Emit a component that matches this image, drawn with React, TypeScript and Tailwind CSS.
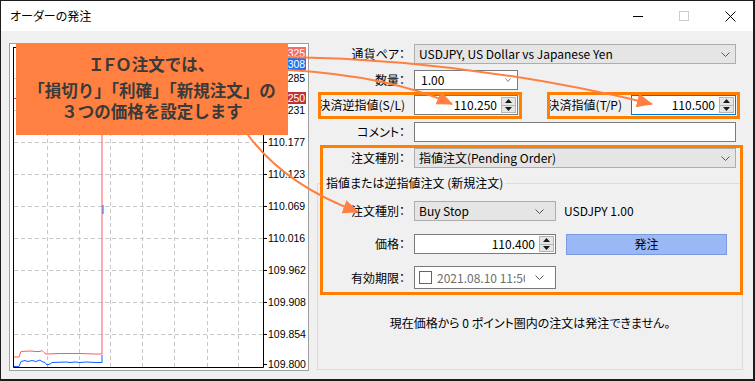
import React from "react";

const Chevron = ({ w = 9, h = 5, color = "#555" }: { w?: number; h?: number; color?: string }) => (
  <svg width={w} height={h} viewBox={`0 0 ${w} ${h}`} className="shrink-0">
    <polyline points={`0.5,0.5 ${w / 2},${h - 0.5} ${w - 0.5},0.5`} fill="none" stroke={color} strokeWidth="1" />
  </svg>
);

const Spinner = () => (
  <div className="w-[15px] h-[16px] mr-[1px] border border-[#b5b5b5] bg-[#e6e6e6] flex flex-col shrink-0">
    <div className="flex-1 flex items-center justify-center border-b border-[#b5b5b5]">
      <svg width="7" height="4" viewBox="0 0 7 4">
        <polygon points="3.5,0 7,4 0,4" fill="#1a1a1a" />
      </svg>
    </div>
    <div className="flex-1 flex items-center justify-center">
      <svg width="7" height="4" viewBox="0 0 7 4">
        <polygon points="0,0 7,0 3.5,4" fill="#1a1a1a" />
      </svg>
    </div>
  </div>
);

const NumField = ({ value, className, focus }: { value: string; className: string; focus?: boolean }) => (
  <div
    className={`flex items-center h-[20px] bg-white border ${focus ? "border-[#0078d7]" : "border-[#7a7a7a]"} ${className}`}
  >
    <div className="flex-1 text-right pr-[4px] leading-[16px]">{value}</div>
    <Spinner />
  </div>
);

const Chart = () => {
  const hy = [78, 110, 142, 174, 206, 238, 270, 302, 334];
  const vx = [47, 79, 110, 142, 174, 207, 238];
  const labels = [
    { y: 78, t: "110.285" },
    { y: 110, t: "110.231" },
    { y: 142, t: "110.177" },
    { y: 174, t: "110.123" },
    { y: 206, t: "110.069" },
    { y: 238, t: "110.016" },
    { y: 270, t: "109.962" },
    { y: 302, t: "109.908" },
    { y: 334, t: "109.854" },
    { y: 364, t: "109.800" },
  ];
  const hl = [
    { y: 53, t: "110.325", c: "#f56a6a", top: 47, h: 11 },
    { y: 64, t: "110.308", c: "#1f72f2", top: 58, h: 12 },
    { y: 98, t: "110.250", c: "#c03232", top: 92, h: 12 },
  ];
  const red =
    "13,357 19,357 21,351.5 30,351 36,351.5 40,351.5 42,350.5 44,352.5 46,354 60,353.5 70,353.5 80,353.5 95,354 102,354 102,47";
  const blue =
    "13,366.5 19,366.5 21,361.5 25,360.5 28,361.5 32,360.5 36,361.5 40,360 42,361.5 45,362.5 47,365 50,364 52,362.5 67,362 70,362.5 75,362 80,362.5 86,362 96,362.5 102,362.5 102,355";
  return (
    <svg width="298" height="326" viewBox="10 44 298 326" className="block">
      <rect x="10" y="44" width="298" height="326" fill="#ffffff" />
      {hy.map((y) => (
        <line key={"h" + y} x1="14" x2="263" y1={y + 0.5} y2={y + 0.5} stroke="#c8c8c8" strokeDasharray="4 3" />
      ))}
      {vx.map((x) => (
        <line key={"v" + x} x1={x + 0.5} x2={x + 0.5} y1="48" y2="367" stroke="#c8c8c8" strokeDasharray="4 3" />
      ))}
      <line x1="13" x2="263" y1="98.5" y2="98.5" stroke="#d04040" />
      <polyline points={red} fill="none" stroke="#ff5a5a" strokeWidth="1" />
      <polyline points={blue} fill="none" stroke="#1060ff" strokeWidth="1" />
      <line x1="103" x2="103" y1="205" y2="214" stroke="#1060ff" />
      <path d="M13.5,47 V367.5 H263.5 V47 M13,47.5 H263.5" fill="none" stroke="#000" />
      {labels.map((l) => (
        <g key={l.t}>
          <line x1="263" x2="267" y1={l.y + 0.5} y2={l.y + 0.5} stroke="#000" />
          <text x="268" y={l.y + 4} fontSize="10.5" fontFamily="Liberation Sans, Arial, sans-serif" fill="#000">
            {l.t}
          </text>
        </g>
      ))}
      {hl.map((l) => (
        <g key={l.t}>
          <rect x="265" y={l.top} width="41" height={l.h} fill={l.c} />
          <text x="268" y={l.y + 4} fontSize="10.5" fontFamily="Liberation Sans, Arial, sans-serif" fill="#fff">
            {l.t}
          </text>
        </g>
      ))}
    </svg>
  );
};

export default function App() {
  return (
    <div className="relative w-[755px] h-[381px] bg-[#1c1c1c] overflow-hidden font-['Noto_Sans_CJK_JP',sans-serif] text-[12px] text-black [font-feature-settings:'palt']">
      <div className="ml-px mt-px w-[752px] h-[378px] bg-[#f0f0f0] flex flex-col">
        {/* title bar */}
        <div className="h-[30px] bg-white flex items-center pl-[9px] shrink-0">
          <span className="leading-[16px]">オーダーの発注</span>
          <div className="ml-auto flex h-full">
            <div className="w-[46px] h-full flex items-center justify-center">
              <div className="w-[10px] h-px bg-black" />
            </div>
            <div className="w-[46px] h-full flex items-center justify-center">
              <div className="w-[10px] h-[10px] border border-[#cccccc]" />
            </div>
            <div className="w-[46px] h-full flex items-center justify-center">
              <svg width="11" height="11" viewBox="0 0 11 11">
                <path d="M0.5,0.5 L10.5,10.5 M10.5,0.5 L0.5,10.5" stroke="#000" strokeWidth="1" />
              </svg>
            </div>
          </div>
        </div>

        {/* body */}
        <div className="flex-1 flex">
          <div className="ml-[8px] mt-[12px] w-[300px] h-[328px] border border-[#a0a0a0] bg-white shrink-0">
            <Chart />
          </div>

          <div className="ml-[7px] mt-[13px] w-[427px] flex flex-col">
            <div className="flex items-center h-[20px]">
              <div className="w-[89px] text-right leading-[16px]">通貨ペア：</div>
              <div className="ml-[9px] w-[322px] h-full border border-[#adadad] bg-[#e5e5e5] flex items-center pl-[4px] pr-[5px]">
                <span className="flex-1 leading-[16px] whitespace-nowrap">USDJPY, US Dollar vs Japanese Yen</span>
                <Chevron />
              </div>
            </div>

            <div className="flex items-center h-[20px] mt-[6px]">
              <div className="w-[89px] text-right leading-[16px]">数量：</div>
              <div className="ml-[9px] w-[104px] h-full border border-[#7a7a7a] bg-white flex items-center pl-[6px] pr-[6px]">
                <span className="flex-1 leading-[16px]">1.00</span>
                <Chevron w={6} h={4} color="#888" />
              </div>
            </div>

            <div className="flex items-center h-[20px] mt-[5px]">
              <div className="w-[89px] text-right leading-[16px] whitespace-nowrap">決済逆指値(S/L)</div>
              <NumField className="ml-[9px] w-[104px]" value="110.250" />
              <div className="w-[104px] text-right leading-[16px] whitespace-nowrap">決済指値(T/P)</div>
              <NumField className="ml-[9px] w-[105px]" value="110.500" focus />
            </div>

            <div className="flex items-center h-[20px] mt-[7px]">
              <div className="w-[89px] text-right leading-[16px]">コメント：</div>
              <div className="ml-[9px] w-[322px] h-full border border-[#7a7a7a] bg-white" />
            </div>

            <div className="flex items-center h-[20px] mt-[6px]">
              <div className="w-[89px] text-right leading-[16px]">注文種別：</div>
              <div className="ml-[9px] w-[322px] h-full border border-[#adadad] bg-[#e5e5e5] flex items-center pl-[4px] pr-[5px]">
                <span className="flex-1 leading-[16px]">指値注文(Pending Order)</span>
                <Chevron />
              </div>
            </div>

            {/* group box */}
            <div className="mt-[15px] ml-px w-[426px] h-[187px] border border-[#dcdcdc] flex flex-col">
              <div className="-mt-[9px] ml-[6px] self-start bg-[#f0f0f0] px-[2px] leading-[16px]">
                指値または逆指値注文 (新規注文)
              </div>

              <div className="flex items-center h-[20px] mt-[10px]">
                <div className="w-[87px] text-right leading-[16px]">注文種別：</div>
                <div className="ml-[9px] w-[142px] h-full border border-[#adadad] bg-[#e5e5e5] flex items-center pl-[4px] pr-[11px]">
                  <span className="flex-1 leading-[16px]">Buy Stop</span>
                  <Chevron />
                </div>
                <span className="ml-[8px] leading-[16px]">USDJPY 1.00</span>
              </div>

              <div className="flex items-center h-[20px] mt-[13px]">
                <div className="w-[87px] text-right leading-[16px]">価格：</div>
                <NumField className="ml-[9px] w-[142px]" value="110.400" />
                <div className="ml-[10px] w-[161px] h-[21px] border border-[#7b9be0] bg-[#99b8f5] flex items-center justify-center leading-[16px]">
                  発注
                </div>
              </div>

              <div className="flex items-center h-[23px] mt-[12px]">
                <div className="w-[87px] text-right leading-[16px]">有効期限：</div>
                <div className="ml-[9px] w-[142px] h-full border border-[#7a7a7a] bg-white flex items-center pl-[4px] pr-[11px]">
                  <div className="w-[13px] h-[13px] border border-[#2a6fc9] bg-white shrink-0" />
                  <div className="ml-[5px] w-[88px] overflow-hidden whitespace-nowrap text-[#6d6d6d] leading-[16px]">
                    2021.08.10 11:50
                  </div>
                  <div className="ml-auto flex">
                    <Chevron />
                  </div>
                </div>
              </div>

              <div className="mt-[26px] text-center leading-[16px]">
                現在価格から 0 ポイント圏内の注文は発注できません。
              </div>
            </div>
          </div>
        </div>
      </div>

      {/* annotation boxes */}
      <div className="absolute left-[318px] top-[92px] w-[204px] h-[27px] border-[3px] border-[#ff8000]" />
      <div className="absolute left-[547px] top-[92px] w-[193px] h-[27px] border-[3px] border-[#ff8000]" />
      <div className="absolute left-[320px] top-[145px] w-[423px] h-[150px] border-[3px] border-[#ff8000]" />

      {/* callout */}
      <div className="absolute left-[16px] top-[44px] w-[272px] h-[91px] bg-[#ff8040] flex flex-col items-center pt-[10px] font-bold text-[16.5px] text-[#3a3a3a] leading-[21px] [font-feature-settings:normal]">
        <div className="mb-[5px]">
          <span className="[font-feature-settings:'palt'] tracking-[1px]">ＩＦＯ</span>注文では、
        </div>
        <div>「損切り」「利確」「新規注文」の</div>
        <div>３つの価格を設定します</div>
      </div>

      {/* arrows */}
      <svg className="absolute left-0 top-0 pointer-events-none" width="755" height="381" viewBox="0 0 755 381">
        <defs>
          <marker
            id="ah"
            viewBox="0 0 16 14"
            refX="15"
            refY="7"
            markerWidth="16"
            markerHeight="14"
            markerUnits="userSpaceOnUse"
            orient="auto"
          >
            <path d="M0,0 L16,7 L0,14 z" fill="#ff8040" />
          </marker>
        </defs>
        <path d="M288,57 Q470,60 652,104" fill="none" stroke="#ff8040" strokeWidth="2" markerEnd="url(#ah)" />
        <path d="M288,70 Q390,76 452,104" fill="none" stroke="#ff8040" strokeWidth="2" markerEnd="url(#ah)" />
        <path d="M248,135 Q285,185 358,212" fill="none" stroke="#ff8040" strokeWidth="2" markerEnd="url(#ah)" />
      </svg>
    </div>
  );
}
